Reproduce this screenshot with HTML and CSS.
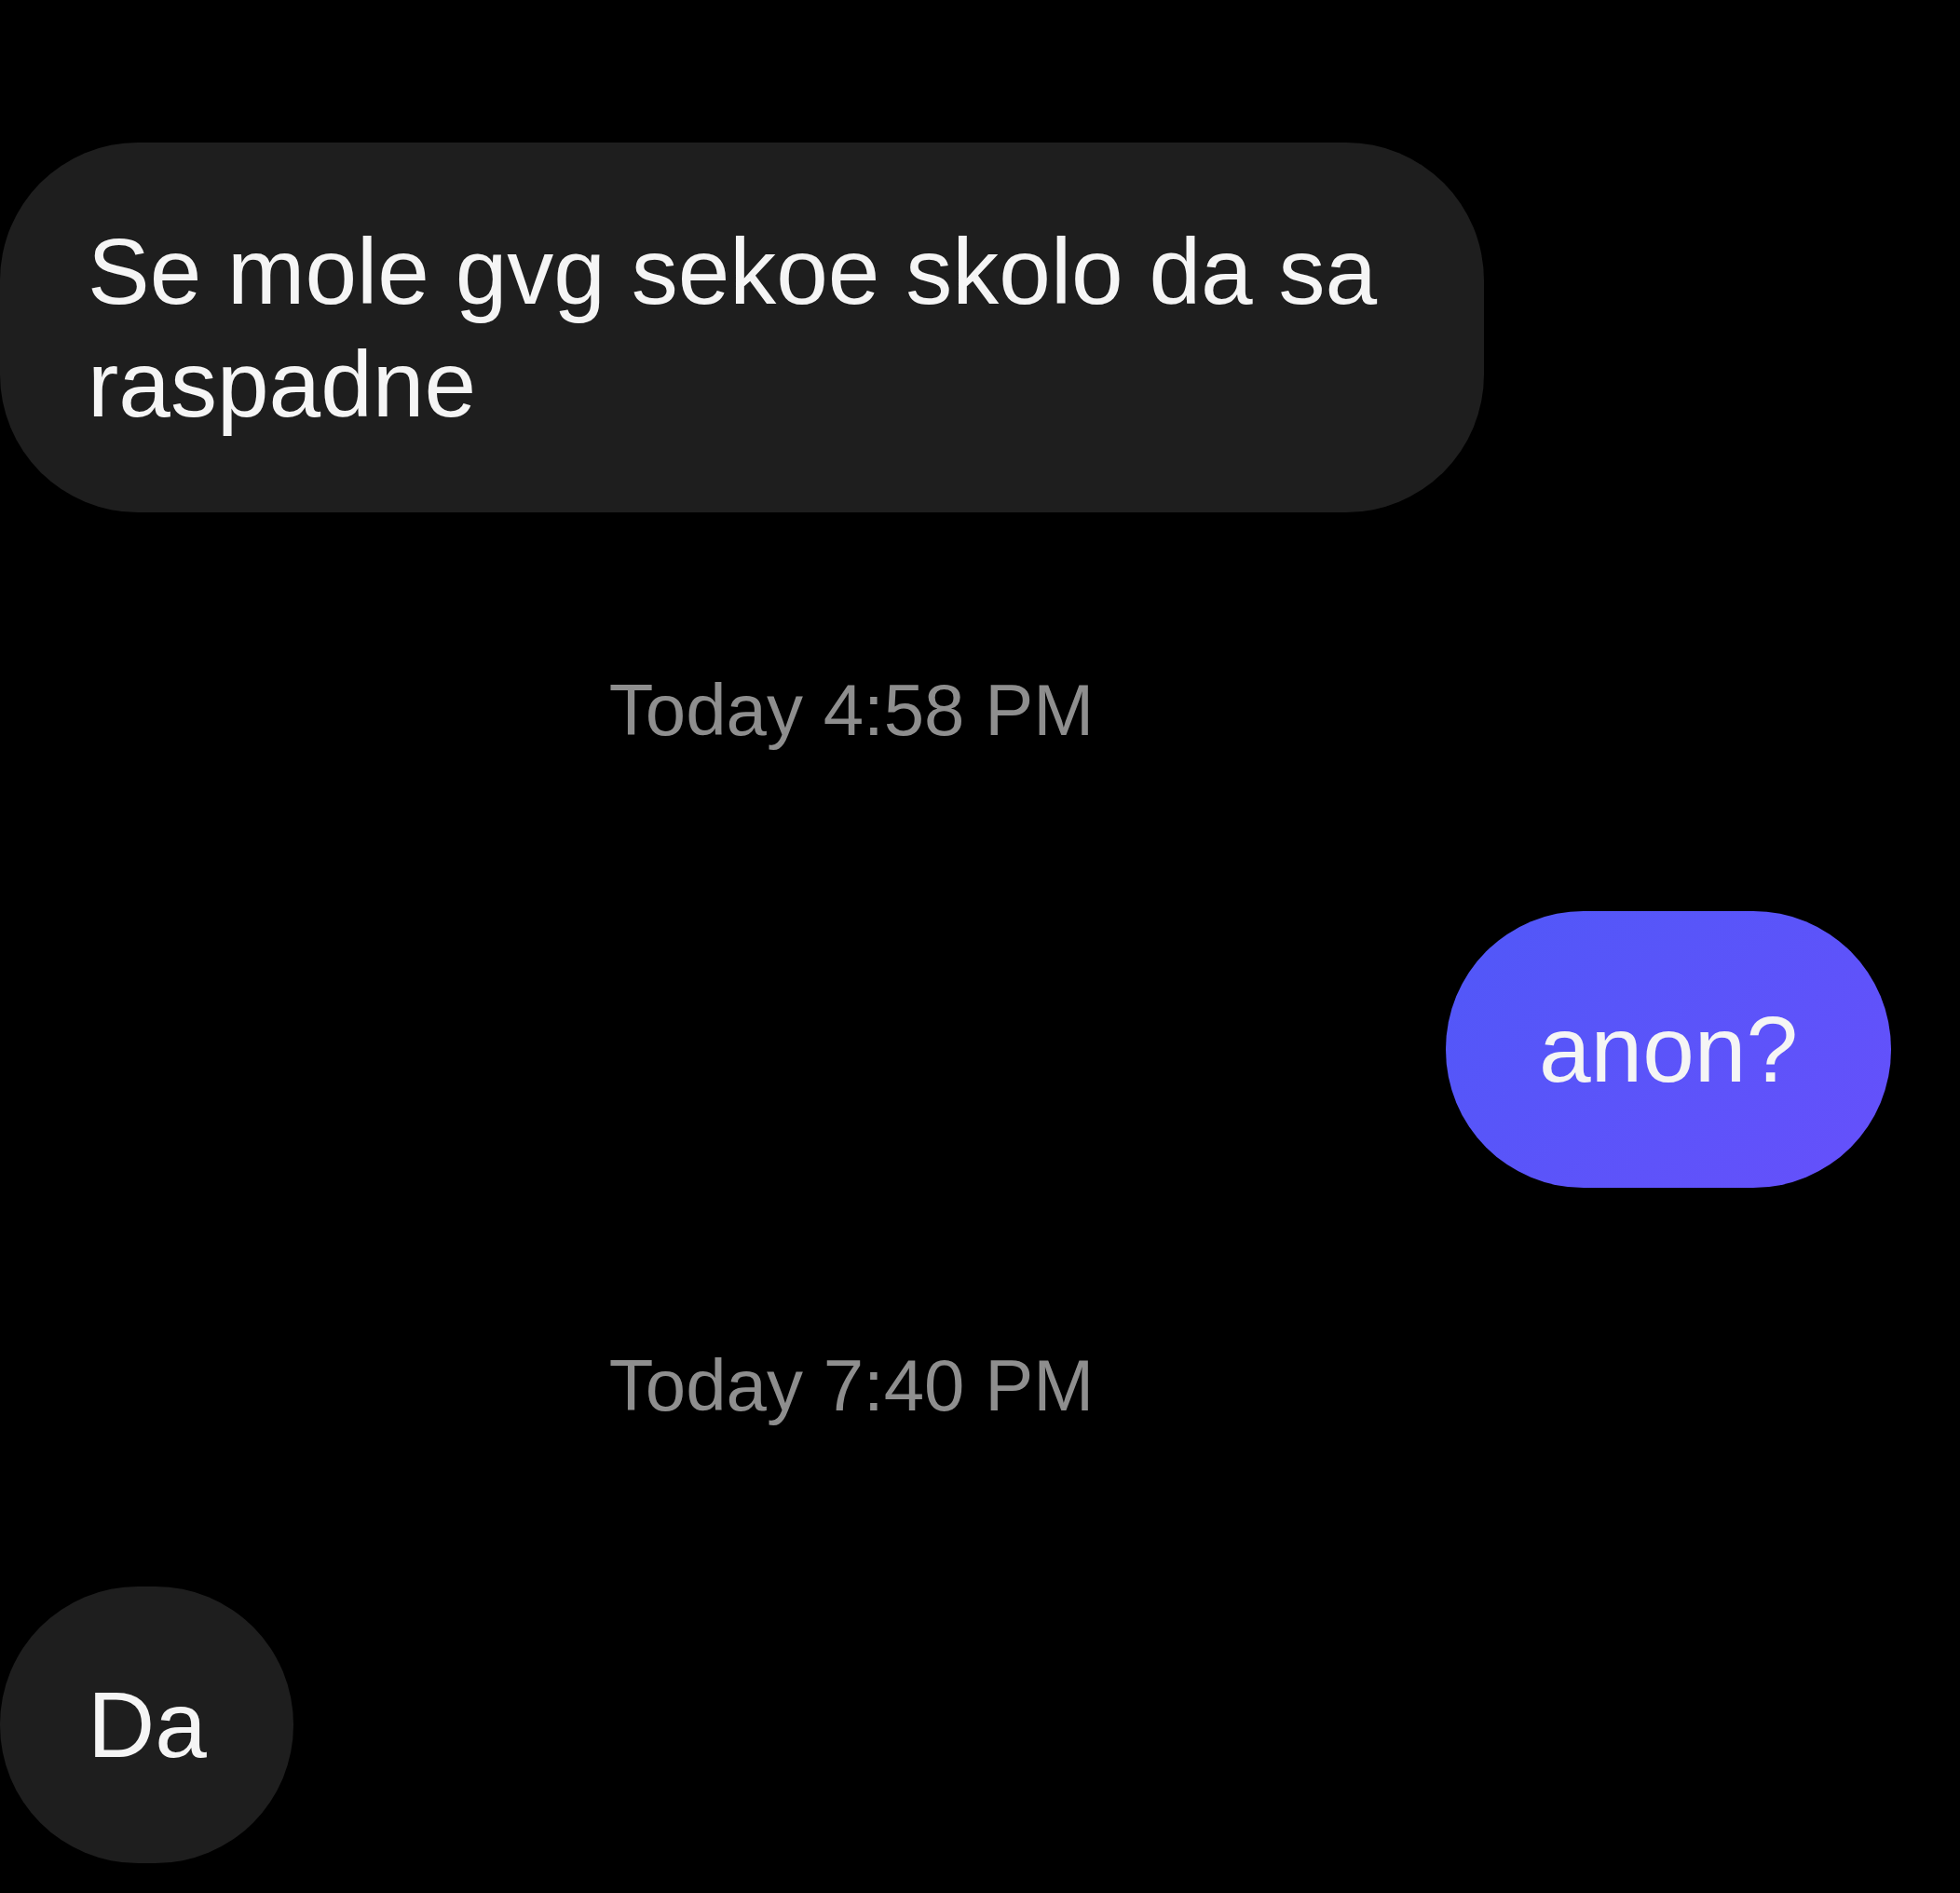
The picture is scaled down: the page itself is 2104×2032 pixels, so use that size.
FILE: index.html
```html
<!DOCTYPE html>
<html lang="en">
<head>
<meta charset="UTF-8">
<meta name="viewport" content="width=device-width, initial-scale=1.0">
<title>Chat</title>
<link rel="stylesheet" href="styles.css">
</head>
<body>
    <div class="chat">
        <div class="msg incoming long">Se mole gvg sekoe skolo da sa raspadne</div>
        <div class="stamp">Today 4:58 PM</div>
        <div class="msg outgoing">anon?</div>
        <div class="stamp">Today 7:40 PM</div>
        <div class="msg incoming short">Da</div>
    </div>
</body>
</html>
```

FILE: styles.css
```css
body {
    margin: 0;
    background-color: #000;
    font-family: "Liberation Sans", Arial, sans-serif;
}

.chat {
    display: flex;
    flex-direction: column;
    padding-top: 153px;
    height: 2032px;
    box-sizing: border-box;
    overflow: hidden;
}

.msg {
    box-sizing: border-box;
    font-size: 100px;
    line-height: 121px;
    color: #f5f5f5;
    border-radius: 148px;
}

.incoming {
    align-self: flex-start;
    background-color: #1e1e1e;
}

.long {
    max-width: 1593px;
    padding: 78px 100px 77px 94px;
}

.short {
    padding: 88px 93px 88px 94px;
}

.outgoing {
    align-self: flex-end;
    margin-right: 74px;
    padding: 88px 100px;
    background: linear-gradient(135deg, #5058f8, #6650fb);
}

.stamp {
    font-size: 78px;
    line-height: 94px;
    color: #8e8e8e;
    text-align: center;
    padding-right: 276px;
    margin: 165px 0 169px;
}
```
